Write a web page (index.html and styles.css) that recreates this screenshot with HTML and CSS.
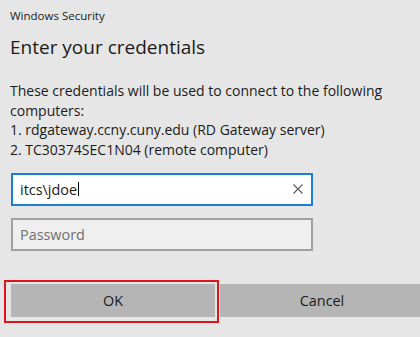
FILE: index.html
```html
<!DOCTYPE html>
<html>
<head>
<meta charset="utf-8">
<link rel="stylesheet" href="styles.css">
</head>
<body>
<div class="dialog">
  <div class="caption">Windows Security</div>
  <h1 class="title">Enter your credentials</h1>
  <p class="desc">These credentials will be used to connect to the following computers:<br>1. rdgateway.ccny.cuny.edu (RD Gateway server)<br>2. TC30374SEC1N04 (remote computer)</p>
  <div class="field field-active">
    <span class="value">itcs\jdoe</span><span class="caret"></span>
    <svg class="clear" width="10" height="10" viewBox="0 0 10 10"><path d="M0.5 0.5 L9.5 9.5 M9.5 0.5 L0.5 9.5" stroke="#5a5a5a" stroke-width="1.1" fill="none"/></svg>
  </div>
  <div class="field field-idle">
    <span class="placeholder">Password</span>
  </div>
  <div class="buttons">
    <div class="ok-wrap"><button class="btn">OK</button></div>
    <button class="btn btn-cancel">Cancel</button>
  </div>
</div>
</body>
</html>
```
FILE: styles.css
```css
html, body {
  margin: 0;
  padding: 0;
  background: #e6e6e6;
  overflow: hidden;
}
body {
  width: 420px;
  height: 337px;
  font-family: "Open Sans", "Noto Sans", sans-serif;
  color: #1b1b1b;
}
.dialog {
  padding: 8px 0 0 10px;
  display: flex;
  flex-direction: column;
}
.caption {
  font-size: 11.5px;
  line-height: 16px;
  height: 16px;
}
.title {
  margin: 10px 0 0 0;
  font-size: 19px;
  font-weight: 400;
  line-height: 26px;
}
.desc {
  margin: 21px 0 0 0;
  font-size: 14px;
  line-height: 19.7px;
  width: 400px;
}
.field {
  box-sizing: border-box;
  width: 302px;
  height: 33px;
  margin-left: 1px;
  display: flex;
  align-items: center;
  padding-left: 7px;
  font-size: 14.4px;
  position: relative;
}
.field-active {
  margin-top: 13px;
  background: #ffffff;
  border: 2px solid #1c7fd6;
}
.field-idle {
  margin-top: 12px;
  background: #efefef;
  border: 2px solid #a0a0a0;
}
.caret {
  width: 1px;
  height: 14px;
  background: #000;
  margin-left: 1px;
}
.clear {
  position: absolute;
  right: 8px;
  top: 9px;
}
.placeholder {
  color: #707070;
}
.buttons {
  display: flex;
  gap: 5px;
  margin-top: 33px;
  margin-left: 1px;
}
.ok-wrap {
  position: relative;
}
.ok-wrap::after {
  content: "";
  position: absolute;
  left: -7px;
  top: -4px;
  right: -4px;
  bottom: -6px;
  border: 2px solid #e0141b;
  box-sizing: border-box;
}
.btn {
  display: block;
  width: 204px;
  height: 33px;
  border: none;
  background: #b5b5b5;
  font-family: inherit;
  font-size: 14.4px;
  color: #1b1b1b;
  padding: 0;
}
.btn-cancel {
  flex: none;
}
```
